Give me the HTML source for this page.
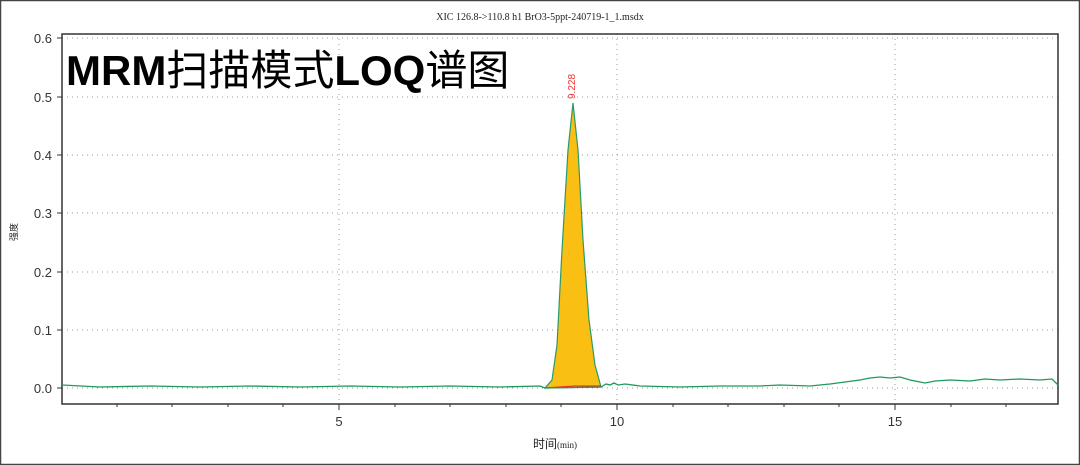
<!DOCTYPE html>
<html><head><meta charset="utf-8"><style>
html,body{margin:0;padding:0;background:#fff;}
svg{display:block;}
text{font-family:"Liberation Sans","Noto Sans CJK SC",sans-serif;}
</style></head><body>
<svg width="1080" height="465" viewBox="0 0 1080 465" xmlns="http://www.w3.org/2000/svg">
<rect x="0.5" y="0.5" width="1079" height="464" fill="#fff" stroke="#444" stroke-width="1.5"/>
<text x="540" y="20" font-size="10" text-anchor="middle" fill="#222" style="font-family:'Liberation Serif',serif">XIC 126.8-&gt;110.8 h1 BrO3-5ppt-240719-1_1.msdx</text>
<g stroke="#999" stroke-dasharray="1,4" stroke-width="1">
<line x1="62" y1="38" x2="1058" y2="38"/><line x1="62" y1="97" x2="1058" y2="97"/><line x1="62" y1="155" x2="1058" y2="155"/><line x1="62" y1="213" x2="1058" y2="213"/><line x1="62" y1="272" x2="1058" y2="272"/><line x1="62" y1="330" x2="1058" y2="330"/><line x1="62" y1="388" x2="1058" y2="388"/>
<line x1="339" y1="34" x2="339" y2="404"/><line x1="617" y1="34" x2="617" y2="404"/><line x1="895" y1="34" x2="895" y2="404"/>
</g>
<rect x="62" y="34" width="996" height="370" fill="none" stroke="#333" stroke-width="1.5"/>
<g stroke="#333" stroke-width="1">
<line x1="57" y1="38" x2="62" y2="38"/><line x1="57" y1="97" x2="62" y2="97"/><line x1="57" y1="155" x2="62" y2="155"/><line x1="57" y1="213" x2="62" y2="213"/><line x1="57" y1="272" x2="62" y2="272"/><line x1="57" y1="330" x2="62" y2="330"/><line x1="57" y1="388" x2="62" y2="388"/>
<line x1="339" y1="404" x2="339" y2="410"/><line x1="617" y1="404" x2="617" y2="410"/><line x1="895" y1="404" x2="895" y2="410"/>
<line x1="117" y1="404" x2="117" y2="407"/><line x1="172" y1="404" x2="172" y2="407"/><line x1="228" y1="404" x2="228" y2="407"/><line x1="283" y1="404" x2="283" y2="407"/><line x1="395" y1="404" x2="395" y2="407"/><line x1="450" y1="404" x2="450" y2="407"/><line x1="506" y1="404" x2="506" y2="407"/><line x1="561" y1="404" x2="561" y2="407"/><line x1="673" y1="404" x2="673" y2="407"/><line x1="728" y1="404" x2="728" y2="407"/><line x1="784" y1="404" x2="784" y2="407"/><line x1="839" y1="404" x2="839" y2="407"/><line x1="951" y1="404" x2="951" y2="407"/><line x1="1006" y1="404" x2="1006" y2="407"/>
</g>
<g font-size="13" fill="#333" text-anchor="end">
<text x="52" y="43">0.6</text><text x="52" y="102">0.5</text><text x="52" y="160">0.4</text><text x="52" y="218">0.3</text><text x="52" y="277">0.2</text><text x="52" y="335">0.1</text><text x="52" y="393">0.0</text>
</g>
<g font-size="13" fill="#333" text-anchor="middle">
<text x="339" y="426">5</text><text x="617" y="426">10</text><text x="895" y="426">15</text>
</g>
<text x="533" y="448" font-size="12" fill="#222">时间<tspan font-size="9" style="font-family:'Liberation Serif',serif">(min)</tspan></text>
<text transform="translate(17,232) rotate(-90)" font-size="9" fill="#222" text-anchor="middle">强度</text>
<text x="66" y="85" font-size="42" fill="#000"><tspan font-weight="bold">MRM</tspan><tspan>扫描模式</tspan><tspan font-weight="bold">LOQ</tspan><tspan>谱图</tspan></text>
<path d="M545,388 L552,380 L557,345 L562,250 L568,150 L573,103 L578,150 L583,240 L589,320 L595,365 L601,387 Z" fill="#f9c013" stroke="#2a9a6a" stroke-width="1.2"/>
<path d="M545,388 L575,386 L601,386" stroke="#e33" stroke-width="1.2" fill="none"/>
<polyline fill="none" stroke="#1f9a5a" stroke-width="1.3" points="62,385 100,387 150,386 200,387 250,386 300,387 350,386 400,387 450,386 500,387 540,386 545,388 601,387 606,384 610,385 614,383 618,385 625,384 640,386 680,387 720,386 760,386 780,385 810,386 830,384 845,382 860,380 870,378 880,377 890,378 900,377 910,380 925,383 935,381 950,380 970,381 985,379 1000,380 1020,379 1040,380 1052,379 1058,385"/>
<text transform="translate(575,99) rotate(-90)" font-size="10" fill="#e33">9.228</text>
</svg>
</body></html>
